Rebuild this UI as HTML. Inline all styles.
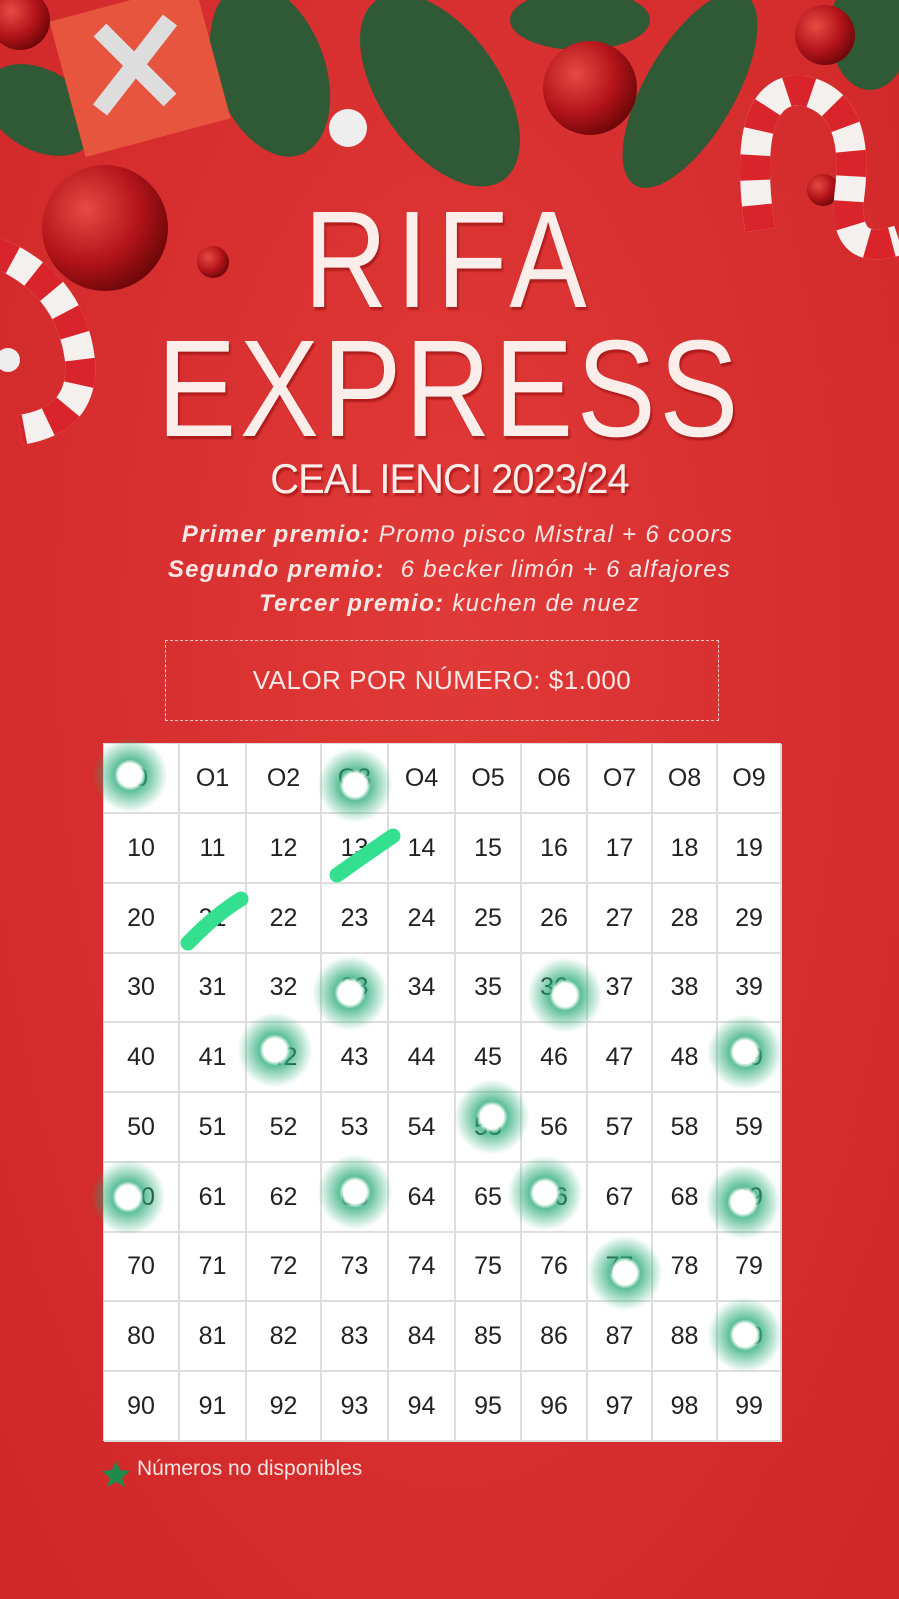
<!DOCTYPE html>
<html><head><meta charset="utf-8"><style>
*{margin:0;padding:0;box-sizing:border-box}
body{width:899px;height:1599px;overflow:hidden;background:#d92f30;position:relative;font-family:"Liberation Sans",sans-serif}
.bg{position:absolute;inset:0;background:radial-gradient(ellipse at 50% 40%,#e03a38 0%,#d62d2e 60%,#cf2628 100%)}
.a{position:absolute}
.t{position:absolute;left:0;width:899px;text-align:center;color:#fbeeea;text-shadow:2px 3px 2px rgba(120,0,0,.45)}
.p{position:absolute;left:0;width:899px;text-align:center;color:#f6e6e4;font-size:24px;font-style:italic;letter-spacing:1.3px}
.p b{font-weight:bold}
.grid{position:absolute;left:103px;top:743px;width:678px;height:698px;background:#fff;border:1px solid #ddd}
.c{position:absolute;display:flex;align-items:center;justify-content:center;font-size:25px;color:#222;border-right:2px solid #ddd;border-bottom:2px solid #ddd}
.m{position:absolute;width:74px;height:74px;border-radius:40%;background:radial-gradient(circle,#fff 0 22%,rgba(40,170,120,.75) 30%,rgba(40,170,120,.3) 55%,rgba(40,170,120,0) 72%);transform:translate(-37px,-37px)}
</style></head><body>
<div class="bg"></div>
<svg class="a" style="left:0;top:0" width="899" height="560">
<defs>
<radialGradient id="rb" cx=".35" cy=".35" r=".7"><stop offset="0" stop-color="#e84a44"/><stop offset=".6" stop-color="#b3141a"/><stop offset="1" stop-color="#6e0709"/></radialGradient>
</defs>
<g fill="#2f5a35">
<ellipse cx="270" cy="70" rx="55" ry="90" transform="rotate(-20 270 70)"/>
<ellipse cx="440" cy="90" rx="60" ry="110" transform="rotate(-35 440 90)"/>
<ellipse cx="690" cy="90" rx="45" ry="110" transform="rotate(30 690 90)"/>
<ellipse cx="580" cy="20" rx="70" ry="30"/>
<ellipse cx="40" cy="110" rx="60" ry="40" transform="rotate(30 40 110)"/>
<ellipse cx="870" cy="30" rx="40" ry="60"/>
</g>
<rect x="65" y="0" width="150" height="140" fill="#e8553e" transform="rotate(-15 140 70)"/>
<path d="M100 30 L170 100 M170 20 L100 110" stroke="#ddd" stroke-width="18"/>
<circle cx="105" cy="228" r="63" fill="url(#rb)"/>
<circle cx="590" cy="88" r="47" fill="url(#rb)"/>
<circle cx="825" cy="35" r="30" fill="url(#rb)"/>
<circle cx="20" cy="20" r="30" fill="url(#rb)"/>
<circle cx="213" cy="262" r="16" fill="url(#rb)"/>
<circle cx="823" cy="190" r="16" fill="url(#rb)"/>
<circle cx="348" cy="128" r="19" fill="#eee"/>
<circle cx="8" cy="360" r="12" fill="#eee"/>
<path d="M-10 250 Q70 280 80 360 Q85 420 20 430" stroke="#f3f0ee" stroke-width="30" fill="none"/>
<path d="M-10 250 Q70 280 80 360 Q85 420 20 430" stroke="#d8242a" stroke-width="30" stroke-dasharray="25 25" fill="none"/>
<path d="M760 230 Q740 90 800 90 Q860 100 850 190 Q840 260 899 240" stroke="#f3f0ee" stroke-width="30" fill="none"/>
<path d="M760 230 Q740 90 800 90 Q860 100 850 190 Q840 260 899 240" stroke="#d8242a" stroke-width="30" stroke-dasharray="25 25" fill="none"/>
</svg>
<div class="t" style="top:191px;font-size:138px;line-height:138px;letter-spacing:10px;transform:scaleX(.84)">RIFA</div>
<div class="t" style="top:320px;font-size:138px;line-height:138px;letter-spacing:4px;transform:scaleX(.86)">EXPRESS</div>
<div class="t" style="top:457px;font-size:42px;line-height:44px;transform:scaleX(.95);letter-spacing:-1px">CEAL IENCI 2023/24</div>
<div class="p" style="top:521px">&nbsp;&nbsp;<b>Primer premio:</b> Promo pisco Mistral + 6 coors</div>
<div class="p" style="top:556px"><b>Segundo premio:</b>&nbsp; 6 becker limón + 6 alfajores</div>
<div class="p" style="top:590px"><b>Tercer premio:</b> kuchen de nuez</div>
<div class="a" style="left:165px;top:640px;width:554px;height:81px;border:1.5px dashed #f2c8c6;color:#f7e8e6;font-size:26px;display:flex;align-items:center;justify-content:center;letter-spacing:.5px">VALOR POR NÚMERO: $1.000</div>
<div class="grid" id="g"></div>
<script>
var xs=[0,76,143,218,285,352,418,484,549,614,678],ys=[0,70,140,210,279,349,419,489,558,628,698],h='';
for(var r=0;r<10;r++)for(var c=0;c<10;c++){h+='<div class="c" style="left:'+xs[c]+'px;top:'+ys[r]+'px;width:'+(xs[c+1]-xs[c])+'px;height:'+(ys[r+1]-ys[r])+'px">'+r+''+c+'</div>';}
var g=document.getElementById('g');g.innerHTML=h;
var cells=g.children;for(var i=0;i<10;i++){cells[i].textContent='O'+i;} 
cells[0].textContent='0';
</script>
<div class="m" style="left:130px;top:775px"></div>
<div class="m" style="left:355px;top:785px"></div>
<div class="m" style="left:350px;top:993px"></div>
<div class="m" style="left:565px;top:995px"></div>
<div class="m" style="left:275px;top:1050px"></div>
<div class="m" style="left:745px;top:1052px"></div>
<div class="m" style="left:492px;top:1117px"></div>
<div class="m" style="left:128px;top:1197px"></div>
<div class="m" style="left:355px;top:1192px"></div>
<div class="m" style="left:545px;top:1193px"></div>
<div class="m" style="left:743px;top:1202px"></div>
<div class="m" style="left:625px;top:1273px"></div>
<div class="m" style="left:745px;top:1335px"></div>
<svg class="a" style="left:0;top:0" width="899" height="1000"><g stroke="#34e08f" stroke-width="15" stroke-linecap="round"><path d="M337 875 Q365 855 393 836"/><path d="M188 943 Q215 915 241 899"/></g></svg>
<svg class="a" style="left:101px;top:1460px" width="30" height="28"><polygon points="15,1 19,10 29,11 21,18 24,27 15,22 6,27 9,18 1,11 11,10" fill="#1f8a4a"/></svg>
<div class="a" style="left:137px;top:1457px;color:#f5e4e2;font-size:21px">Números no disponibles</div>
</body></html>
